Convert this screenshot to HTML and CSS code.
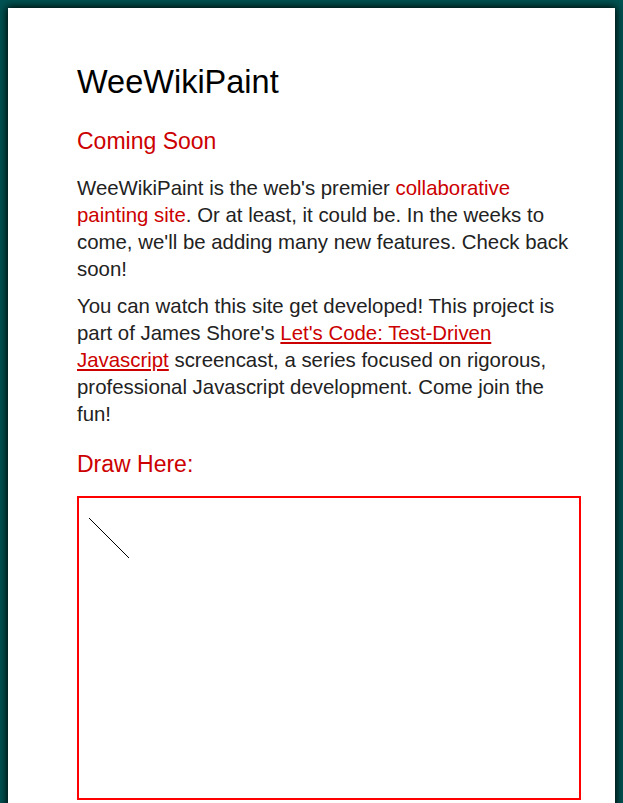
FILE: index.html
```html
<!DOCTYPE html>
<html>
<head>
<meta charset="utf-8">
<title>WeeWikiPaint</title>
<link rel="stylesheet" href="styles.css">
</head>
<body>
<div class="page">
  <h1 class="title">WeeWikiPaint</h1>
  <h2 class="subtitle">Coming Soon</h2>
  <p class="text">WeeWikiPaint is the web's premier <span class="hl">collaborative painting site</span>. Or at least, it could be. In the weeks to come, we'll be adding many new features. Check back soon!</p>
  <p class="text">You can watch this site get developed! This project is part of James Shore's <a class="link" href="#">Let's Code: Test-Driven Javascript</a> screencast, a series focused on rigorous, professional Javascript development. Come join the fun!</p>
  <h2 class="subtitle draw">Draw Here:</h2>
  <div class="canvas">
    <svg width="500" height="300" viewBox="0 0 500 300"><line x1="10" y1="20" x2="50" y2="60" stroke="#000" stroke-width="1"/></svg>
  </div>
</div>
</body>
</html>
```

FILE: styles.css
```css
html, body {
  margin: 0;
  padding: 0;
}
body {
  background: #005252;
  padding: 8px 8px 0 8px;
  font-family: "Liberation Sans", Arial, sans-serif;
  color: #222;
  overflow: hidden;
  height: 803px;
  box-sizing: border-box;
}
.page {
  background: #fff;
  box-shadow: 0 0 8px 1px #000;
  padding: 55px 34px 40px 69px;
  min-height: 900px;
}
.title {
  font-size: 32.5px;
  line-height: 38px;
  font-weight: normal;
  color: #000;
  margin: 0;
}
.subtitle {
  font-size: 23px;
  line-height: 28px;
  font-weight: normal;
  color: #cc0000;
  margin: 26px 0 0 0;
}
.text {
  font-size: 20.4px;
  line-height: 27px;
  margin: 10px 0 0 0;
}
.subtitle + .text {
  margin-top: 19.5px;
}
.subtitle.draw {
  margin-top: 22.5px;
}
.hl {
  color: #cc0000;
}
.link {
  color: #cc0000;
  text-decoration: underline;
}
.canvas {
  margin-top: 18px;
  width: 500px;
  height: 300px;
  border: 2px solid #ff0000;
}
.canvas svg {
  display: block;
}
```
